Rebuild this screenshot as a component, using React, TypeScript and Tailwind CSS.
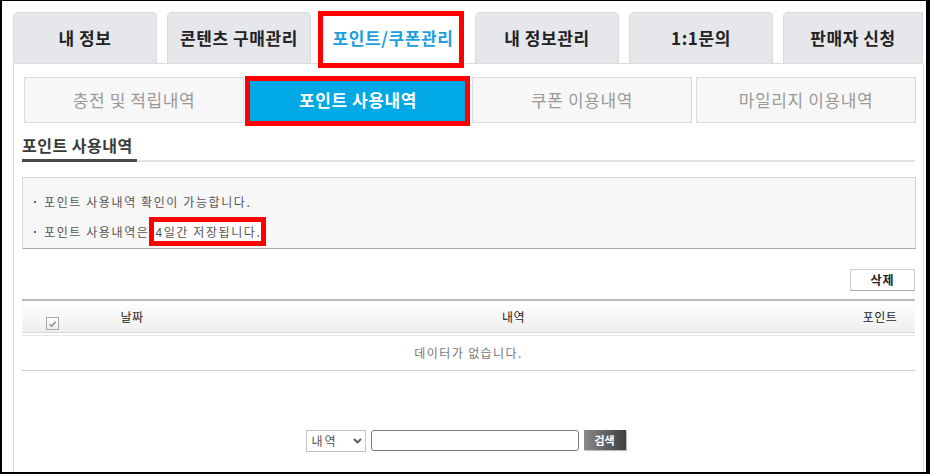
import React from "react";

const tabs = ["내 정보", "콘텐츠 구매관리", "포인트/쿠폰관리", "내 정보관리", "1:1문의", "판매자 신청"];
const subTabs = ["충전 및 적립내역", "포인트 사용내역", "쿠폰 이용내역", "마일리지 이용내역"];

export default function App() {
  return (
    <div className="w-[930px] h-[474px] overflow-hidden bg-white border-t border-l-2 border-r-4 border-b-2 border-black font-['Noto_Sans_CJK_KR','Noto_Sans',sans-serif]">
      {/* main tabs */}
      <div className="flex items-start gap-[10px] pt-[11px] pl-[11px]">
        {tabs.map((t, i) => {
          const active = i === 2;
          const last = i === tabs.length - 1;
          if (active) {
            return (
              <div
                key={t}
                className="relative z-10 w-[144px] h-[52px] -mb-px bg-white flex items-center justify-center text-[17px] font-bold text-[#1a9fe0] tracking-[0.6px]"
              >
                {t}
                <div className="absolute -left-[3px] -top-[1px] w-[146px] h-[57px] border-[5px] border-[#ff0000]" />
              </div>
            );
          }
          return (
            <div
              key={t}
              className={`${last ? "w-[140px] rounded-tl-[5px]" : "w-[144px] rounded-t-[5px]"} h-[51px] bg-[#e6e7ea] border-t border-x border-[#d9d9dc] flex items-center justify-center text-[17px] font-bold text-[#222] tracking-[0.6px]`}
            >
              {t}
            </div>
          );
        })}
      </div>

      {/* panel */}
      <div className="ml-[11px] w-[911px] h-[420px] border-t border-x border-[#dcdcdc] pl-[8px] pt-[13px]">
        {/* sub tabs */}
        <div className="ml-[2px] grid grid-cols-[220px_220px_220px_220px] gap-[4px]">
          {subTabs.map((s, i) =>
            i === 1 ? (
              <div key={s} className="relative h-[46px] bg-[#00a8e6] flex items-center justify-center text-[17px] font-bold text-white tracking-[0.6px]">
                {s}
                <div className="absolute -left-[3px] -top-[1px] w-[225px] h-[50px] border-[5px] border-[#ff0000]" />
              </div>
            ) : (
              <div key={s} className="h-[46px] bg-[#f7f7f7] border border-[#dcdcdc] flex items-center justify-center text-[17px] text-[#9a9a9a] tracking-[0.6px]">
                {s}
              </div>
            )
          )}
        </div>

        {/* section title */}
        <div className="mt-[12px] w-[893px] border-b-2 border-[#e3e3e3]">
          <div className="w-[115px] -mb-[2px] pb-[4px] border-b-[3px] border-[#4a4a4a] leading-[20px] text-[16px] font-bold text-[#3a3a3a] tracking-[0.5px]">
            포인트 사용내역
          </div>
        </div>

        {/* info box */}
        <div className="mt-[15px] w-[894px] h-[72px] bg-[#f7f7f7] border border-[#d5d5d5] border-b-[#a8a8a8] pl-[11px] pt-[14px] text-[12px] text-[#555] leading-[20px] tracking-[1.6px]">
          <div className="flex items-center">
            <span className="inline-block w-[2px] h-[2px] bg-[#666] mr-[8px]" />
            <span>포인트 사용내역 확인이 가능합니다.</span>
          </div>
          <div className="flex items-center mt-[10px]">
            <span className="inline-block w-[2px] h-[2px] bg-[#666] mr-[8px]" />
            <span>
              포인트 사용내역은
              <span className="inline-block -my-[5px] bg-white border-[5px] border-[#ff0000] leading-[19px] pl-[1px] pr-0">
                4일간 저장됩니다.
              </span>
            </span>
          </div>
        </div>

        {/* delete button */}
        <div className="mt-[20px] w-[893px] flex justify-end">
          <button className="w-[65px] h-[22px] bg-white border border-[#cccccc] border-b-[#a9a9a9] text-[12px] font-bold text-[#222] leading-none tracking-[1px]">
            삭제
          </button>
        </div>

        {/* table */}
        <div className="mt-[8px] w-[893px] border-t-2 border-[#bcbcbc] text-[12px]">
          <div className="grid grid-cols-[60px_100px_663px_70px] h-[32px] bg-gradient-to-b from-white to-[#efefef] border-b border-[#d6d6d6] text-[#1a1a1a] tracking-[0.5px]">
            <div className="flex justify-center">
              <div className="mt-[16px] w-[13px] h-[13px] border border-[#a9a9a9] bg-gradient-to-b from-white to-[#ececec] flex items-center justify-center">
                <svg width="9" height="8" viewBox="0 0 9 8">
                  <path d="M1.5 4.2 L3.6 6.2 L7.6 1.8" fill="none" stroke="#8a8a8a" strokeWidth="1.4" />
                </svg>
              </div>
            </div>
            <div className="flex items-center justify-center pt-[1px]">날짜</div>
            <div className="flex items-center justify-center pt-[1px]">내역</div>
            <div className="flex items-center justify-center pt-[1px]">포인트</div>
          </div>
          <div className="h-[2px] bg-white" />
          <div className="border-t border-[#e6e6e6] h-[36px] border-b border-b-[#cfcfcf] flex items-center justify-center text-[#777] tracking-[1.4px]">
            데이터가 없습니다.
          </div>
        </div>

        {/* search */}
        <div className="mt-[59px] w-[893px] flex justify-center items-start gap-[5px] pr-[6px]">
          <div className="w-[60px] h-[22px] border border-[#c2c2c2] bg-white flex items-center justify-between pl-[5px] pr-[3px] text-[12px] text-[#555] tracking-[2px]">
            <span>내역</span>
            <svg width="9" height="6" viewBox="0 0 9 6">
              <path d="M1 1 L4.5 4.5 L8 1" fill="none" stroke="#555" strokeWidth="1.8" />
            </svg>
          </div>
          <div className="w-[208px] h-[21px] border border-[#7a7a7a] rounded-[3px] bg-white" />
          <button className="w-[42px] h-[20px] bg-gradient-to-r from-[#8a8a8a] to-[#3f3f3f] shadow-[1px_1px_1px_rgba(0,0,0,0.25)] text-[11px] font-bold text-white leading-none">
            검색
          </button>
        </div>
      </div>
    </div>
  );
}
